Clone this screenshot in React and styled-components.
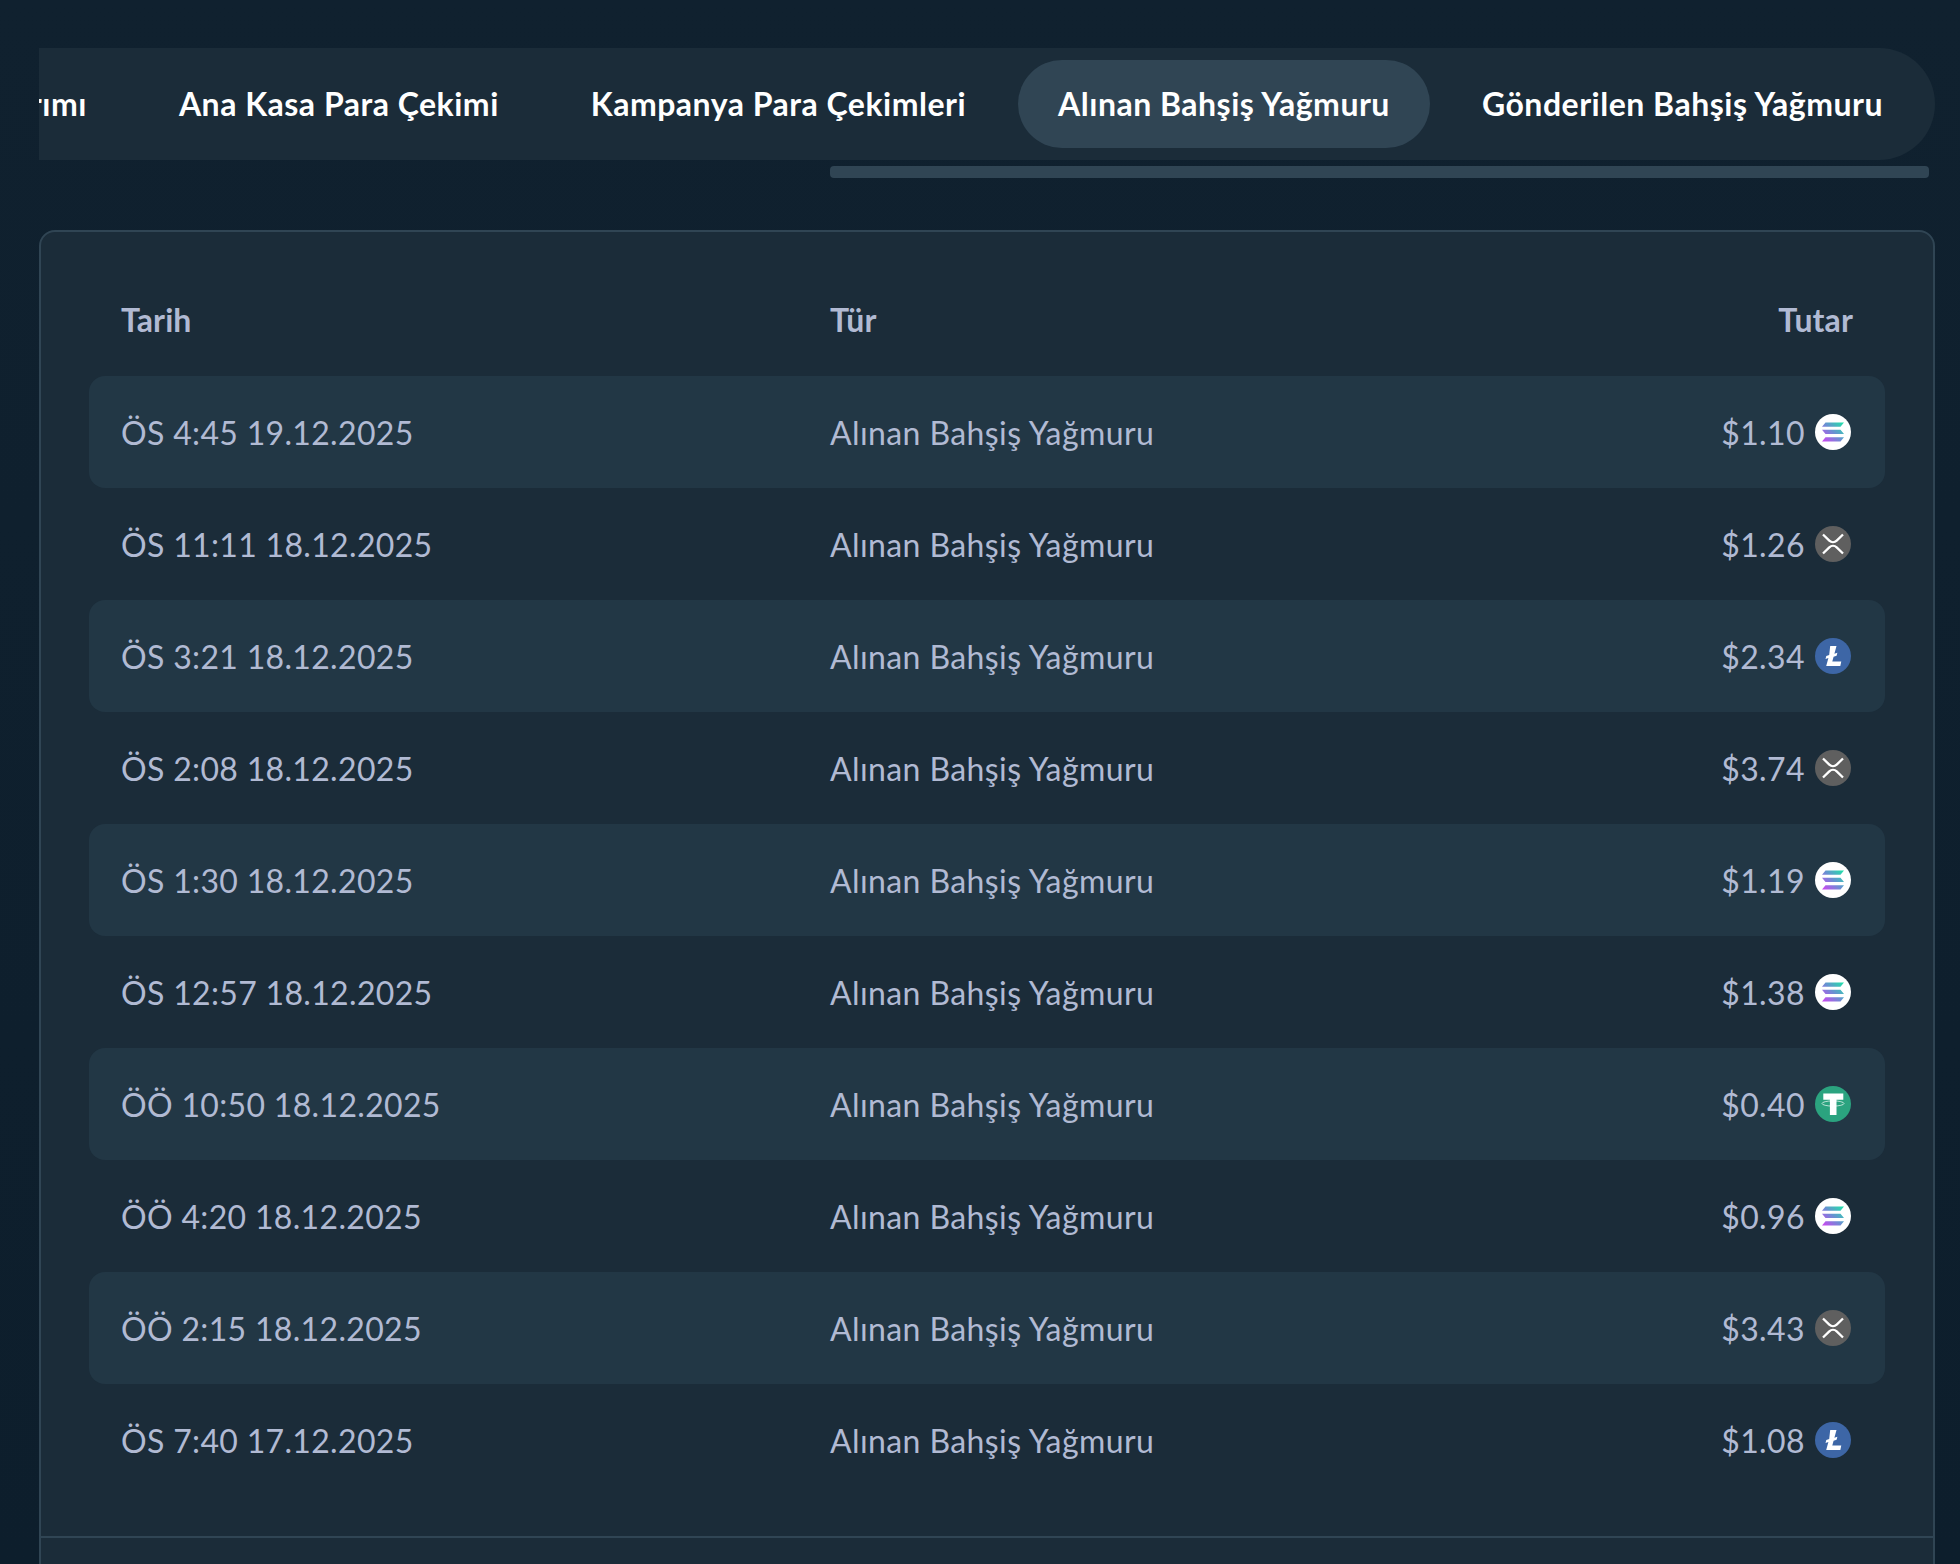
import React from 'react'
import styled, { createGlobalStyle } from 'styled-components'

const GlobalStyle = createGlobalStyle`
  html, body {
    margin: 0;
    padding: 0;
    background: #10212f;
  }
  * {
    box-sizing: border-box;
  }
`

const tabs = ['Ana Kasa Para Yatırımı', 'Ana Kasa Para Çekimi', 'Kampanya Para Çekimleri', 'Alınan Bahşiş Yağmuru', 'Gönderilen Bahşiş Yağmuru']

const rows = [
  { date: 'ÖS 4:45 19.12.2025', amount: '$1.10', coin: 'sol' },
  { date: 'ÖS 11:11 18.12.2025', amount: '$1.26', coin: 'xrp' },
  { date: 'ÖS 3:21 18.12.2025', amount: '$2.34', coin: 'ltc' },
  { date: 'ÖS 2:08 18.12.2025', amount: '$3.74', coin: 'xrp' },
  { date: 'ÖS 1:30 18.12.2025', amount: '$1.19', coin: 'sol' },
  { date: 'ÖS 12:57 18.12.2025', amount: '$1.38', coin: 'sol' },
  { date: 'ÖÖ 10:50 18.12.2025', amount: '$0.40', coin: 'usdt' },
  { date: 'ÖÖ 4:20 18.12.2025', amount: '$0.96', coin: 'sol' },
  { date: 'ÖÖ 2:15 18.12.2025', amount: '$3.43', coin: 'xrp' },
  { date: 'ÖS 7:40 17.12.2025', amount: '$1.08', coin: 'ltc' },
]

const SolIcon = () => (
  <svg width="36" height="36" viewBox="0 0 36 36">
    <defs>
      <linearGradient id="solGrad" gradientUnits="userSpaceOnUse" x1="28" y1="8" x2="8" y2="28">
        <stop offset="0" stopColor="#1fe3a8" />
        <stop offset="0.5" stopColor="#6a8fd2" />
        <stop offset="1" stopColor="#cf45f2" />
      </linearGradient>
    </defs>
    <circle cx="18" cy="18" r="18" fill="#fff" />
    <path d="M10.500 8.500H29l-3.500 4.200H7z M7 15.800h18.500l3.500 4.200H10.500z M10.500 23.300H29l-3.500 4.200H7z" fill="url(#solGrad)" />
  </svg>
)

const XrpIcon = () => (
  <svg width="36" height="36" viewBox="0 0 36 36">
    <circle cx="18" cy="18" r="18" fill="#5f5f5f" />
    <path
      d="M8 8.500L14.300 14.600C16.400 16.600 19.600 16.600 21.700 14.600L28 8.500 M8 27.500L14.300 21.400C16.400 19.400 19.600 19.400 21.700 21.400L28 27.500"
      fill="none"
      stroke="#fff"
      strokeWidth="2.300"
    />
  </svg>
)

const LtcIcon = () => (
  <svg width="36" height="36" viewBox="0 0 36 36">
    <circle cx="18" cy="18" r="18" fill="#3d66a6" />
    <path d="M15.200 8h6.300l-2.100 7.800 3-1.100-.8 3-3 1.100-1.300 4.800h9l-1 4.400H11.200l2.200-8-2.900 1.100.8-3 2.900-1z" fill="#fff" />
  </svg>
)

const UsdtIcon = () => (
  <svg width="36" height="36" viewBox="0 0 36 36">
    <circle cx="18" cy="18" r="18" fill="#2ba37f" />
    <path d="M8.300 7.500h20v6.300h-6.800V29h-6.600V13.800H8.300z" fill="#fff" />
    <ellipse cx="18" cy="17.500" rx="11" ry="2.600" fill="none" stroke="#fff" strokeOpacity="0.75" strokeWidth="0.9" />
  </svg>
)

const coinIcons = { sol: SolIcon, xrp: XrpIcon, ltc: LtcIcon, usdt: UsdtIcon }

const App = () => {
  return (
    <Page>
      <GlobalStyle />
      <TabScroller>
        <TabBar>
          {tabs.map(t => (
            <Tab key={t} $active={t === 'Alınan Bahşiş Yağmuru'}>{t}</Tab>
          ))}
        </TabBar>
        <ScrollTrack>
          <ScrollThumb />
        </ScrollTrack>
      </TabScroller>
      <Card>
        <TableBody>
          <HeadRow>
            <span>Tarih</span>
            <span>Tür</span>
            <span>Tutar</span>
          </HeadRow>
          {rows.map((r, i) => {
            const Icon = coinIcons[r.coin]
            return (
              <Row key={r.date} $striped={i % 2 === 0}>
                <DateCell>{r.date}</DateCell>
                <span>Alınan Bahşiş Yağmuru</span>
                <Amount>
                  {r.amount}
                  <Icon />
                </Amount>
              </Row>
            )
          })}
        </TableBody>
        <CardFooter />
      </Card>
    </Page>
  )
}

const Page = styled.div`
  height: 1564px;
  overflow: hidden;
  padding: 48px 25px 0 39px;
  background: linear-gradient(180deg, #10212f 0%, #0d1e2c 100%);
  font-family: Lato, "Noto Sans", sans-serif;
`

const TabScroller = styled.div`
  display: flex;
  flex-direction: column;
`

const TabBar = styled.div`
  display: flex;
  justify-content: flex-end;
  gap: 12px;
  height: 112px;
  padding: 12px;
  overflow: hidden;
  background: #1b2c39;
  border-radius: 0 56px 56px 0;
`

const Tab = styled.div`
  flex: none;
  display: flex;
  align-items: center;
  height: 88px;
  padding: 0 40px 2px;
  border-radius: 44px;
  background: ${props => props.$active ? '#304554' : 'transparent'};
  color: #fff;
  font-size: 32px;
  font-weight: 700;
  letter-spacing: 0.5px;
  white-space: nowrap;
`

const ScrollTrack = styled.div`
  display: flex;
  justify-content: flex-end;
  margin: 6px 6px 52px 0;
`

const ScrollThumb = styled.div`
  width: 1099px;
  height: 12px;
  border-radius: 4px;
  background: #304554;
`

const Card = styled.div`
  background: #1b2c39;
  border: 2px solid #304554;
  border-radius: 16px;
`

const TableBody = styled.div`
  padding: 32px 48px 40px;
  border-bottom: 2px solid #304554;
`

const HeadRow = styled.div`
  display: grid;
  grid-template-columns: 709px 1fr auto;
  align-items: center;
  height: 112px;
  padding: 0 32px 2px;
  color: #b1bad3;
  font-size: 32px;
  font-weight: 700;
  letter-spacing: 0.1px;
`

const Row = styled.div`
  display: grid;
  grid-template-columns: 709px 1fr auto;
  align-items: center;
  height: 112px;
  padding: 1px 32px 0;
  border-radius: 16px;
  background: ${props => props.$striped ? '#223745' : 'transparent'};
  color: #b1bad3;
  font-size: 32px;
  font-weight: 400;
  letter-spacing: 0.4px;
  line-height: 36px;
`

const DateCell = styled.span`
  letter-spacing: 0.33px;
`

const Amount = styled.div`
  display: flex;
  align-items: center;
  gap: 10px;
  margin-right: 2px;

  svg {
    margin-top: -2px;
  }
`

const CardFooter = styled.div`
  height: 100px;
`

export default App
